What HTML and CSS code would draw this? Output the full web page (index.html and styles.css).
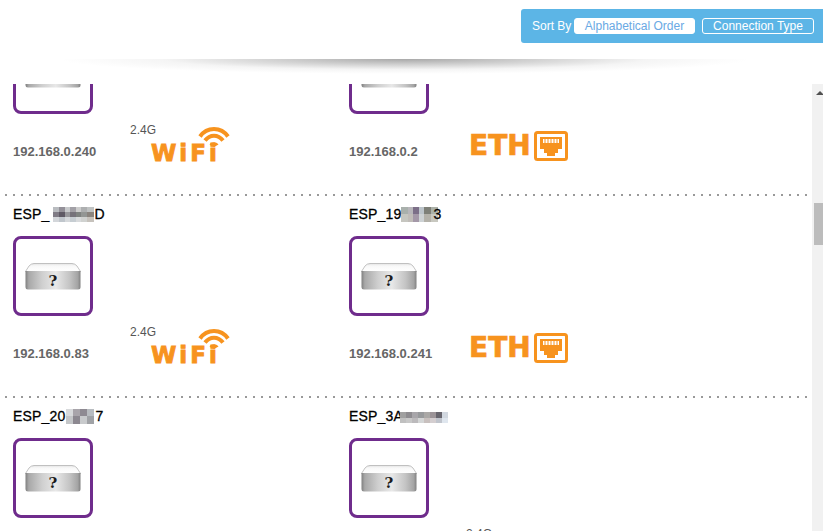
FILE: index.html
```html
<!DOCTYPE html>
<html lang="en">
<head>
<meta charset="utf-8">
<title>Devices</title>
<link rel="stylesheet" href="styles.css">
</head>
<body>
<svg class="defs" width="0" height="0" aria-hidden="true">
  <defs>
    <linearGradient id="side" x1="0" x2="1" y1="0" y2="0">
      <stop offset="0" stop-color="#7f7f7f"/>
      <stop offset=".06" stop-color="#a8a8a8"/>
      <stop offset=".3" stop-color="#cfcfcf"/>
      <stop offset=".55" stop-color="#e8e8e8"/>
      <stop offset=".8" stop-color="#c4c4c4"/>
      <stop offset=".95" stop-color="#a4a4a4"/>
      <stop offset="1" stop-color="#808080"/>
    </linearGradient>
    <linearGradient id="top" x1="0" x2="0" y1="0" y2="1">
      <stop offset="0" stop-color="#e2e2e2"/>
      <stop offset=".3" stop-color="#f8f8f8"/>
      <stop offset="1" stop-color="#ffffff"/>
    </linearGradient>
    <symbol id="mac" viewBox="0 0 56 27">
      <path d="M9 .5h38q3 0 5 2.500L55.500 8.500H.5L4 3Q6 .5 9 .5z" fill="url(#top)" stroke="#b4b4b4" stroke-width=".8"/>
      <path d="M.5 8h55v16q0 2.500-2.500 2.500H3Q.5 26.500.5 24z" fill="url(#side)"/>
      <text x="28" y="23" text-anchor="middle" class="mac-q">?</text>
    </symbol>
    <symbol id="rj" viewBox="0 0 34 30">
      <rect x="1.500" y="1.500" width="31" height="27" rx="2" fill="#fff" stroke="#f7931e" stroke-width="3"/>
      <path d="M6 6h22v12h-4v4h-3v3h-8v-3h-3v-4H6z" fill="#f7931e"/>
      <path d="M9 8h16v4H9z" fill="#fff"/>
      <path d="M11 8v4M14 8v4M17 8v4M20 8v4M23 8v4" stroke="#f7931e" stroke-width="1"/>
    </symbol>
    <symbol id="arcs" viewBox="0 0 32 20">
      <g fill="none" stroke="#f7931e" stroke-width="4">
        <path d="M2 9.500C9-.5 23-.5 30 9.500"/>
        <path d="M7 13.500C12 7 20 7 25 13.500"/>
      </g>
      <path d="M11.500 17.500C14 14.500 18 14.500 20.500 17.500L16 20z" fill="#f7931e"/>
    </symbol>
  </defs>
</svg>

<header class="top">
  <div class="sort">
    <span class="sort-label">Sort By</span>
    <button class="sort-btn is-active">Alphabetical Order</button>
    <button class="sort-btn">Connection Type</button>
  </div>
  <div class="shade"></div>
</header>

<div class="body">
  <main class="list">
    <div class="rows">
      <section class="row">
        <article class="cell">
          <h3 class="name">ESP_240</h3>
          <div class="device"><svg class="mac"><use href="#mac"/></svg></div>
          <div class="meta">
            <span class="ip">192.168.0.240</span>
            <span class="band">2.4G</span>
            <div class="wifi"><svg class="arcs"><use href="#arcs"/></svg><span class="wifi-text">WiFi</span></div>
          </div>
        </article>
        <article class="cell">
          <h3 class="name">ESP_002</h3>
          <div class="device"><svg class="mac"><use href="#mac"/></svg></div>
          <div class="meta">
            <span class="ip">192.168.0.2</span>
            <div class="eth"><span class="eth-text">ETH</span><svg class="rj"><use href="#rj"/></svg></div>
          </div>
        </article>
      </section>
      <div class="rule"></div>

      <section class="row">
        <article class="cell">
          <h3 class="name">ESP_<svg class="mosaic m43" viewBox="0 0 43 16"><g shape-rendering="crispEdges">
            <rect x="0" y="0" width="6" height="5" fill="#b9bcc0"/><rect x="6" y="0" width="6" height="5" fill="#939098"/><rect x="12" y="0" width="6" height="5" fill="#c8cacc"/><rect x="18" y="0" width="6" height="5" fill="#a2a0a6"/><rect x="24" y="0" width="6" height="5" fill="#cccccc"/><rect x="30" y="0" width="6" height="5" fill="#adafb0"/><rect x="36" y="0" width="7" height="5" fill="#bfc2c2"/>
            <rect x="0" y="5" width="6" height="6" fill="#7f7b85"/><rect x="6" y="5" width="6" height="6" fill="#5f5a65"/><rect x="12" y="5" width="6" height="6" fill="#98989c"/><rect x="18" y="5" width="6" height="6" fill="#75727a"/><rect x="24" y="5" width="6" height="6" fill="#7e8280"/><rect x="30" y="5" width="6" height="6" fill="#939694"/><rect x="36" y="5" width="7" height="6" fill="#8a847e"/>
            <rect x="0" y="11" width="6" height="5" fill="#d3d6da"/><rect x="6" y="11" width="6" height="5" fill="#c0c6cc"/><rect x="12" y="11" width="6" height="5" fill="#d6d9dc"/><rect x="18" y="11" width="6" height="5" fill="#c6cdd2"/><rect x="24" y="11" width="6" height="5" fill="#d8dadc"/><rect x="30" y="11" width="6" height="5" fill="#d0d2d0"/><rect x="36" y="11" width="7" height="5" fill="#c6c2bc"/>
          </g></svg>D</h3>
          <div class="device"><svg class="mac"><use href="#mac"/></svg></div>
          <div class="meta">
            <span class="ip">192.168.0.83</span>
            <span class="band">2.4G</span>
            <div class="wifi"><svg class="arcs"><use href="#arcs"/></svg><span class="wifi-text">WiFi</span></div>
          </div>
        </article>
        <article class="cell">
          <h3 class="name">ESP_19<svg class="mosaic m37" viewBox="0 0 37 15"><g shape-rendering="crispEdges">
            <rect x="0" y="0" width="7" height="7" fill="#a9b0ac"/><rect x="7" y="0" width="5" height="7" fill="#b8b6ba"/><rect x="12" y="0" width="6" height="7" fill="#7c6f88"/><rect x="18" y="0" width="5" height="7" fill="#bcc4ca"/><rect x="23" y="0" width="7" height="7" fill="#7e8078"/><rect x="30" y="0" width="7" height="7" fill="#aab0a8"/>
            <rect x="0" y="7" width="7" height="8" fill="#c6c6c0"/><rect x="7" y="7" width="5" height="8" fill="#c0bcb8"/><rect x="12" y="7" width="6" height="8" fill="#a498a8"/><rect x="18" y="7" width="5" height="8" fill="#cdd2d4"/><rect x="23" y="7" width="7" height="8" fill="#b4b2aa"/><rect x="30" y="7" width="7" height="8" fill="#c8c8c0"/>
          </g></svg><span class="name-end">3</span></h3>
          <div class="device"><svg class="mac"><use href="#mac"/></svg></div>
          <div class="meta">
            <span class="ip">192.168.0.241</span>
            <div class="eth"><span class="eth-text">ETH</span><svg class="rj"><use href="#rj"/></svg></div>
          </div>
        </article>
      </section>
      <div class="rule"></div>

      <section class="row">
        <article class="cell">
          <h3 class="name">ESP_20<svg class="mosaic m28" viewBox="0 0 28 15"><g shape-rendering="crispEdges">
            <rect x="0" y="0" width="7" height="7" fill="#d8dadc"/><rect x="7" y="0" width="7" height="7" fill="#a8a4aa"/><rect x="14" y="0" width="7" height="7" fill="#8e8a92"/><rect x="21" y="0" width="7" height="7" fill="#b8bcc0"/>
            <rect x="0" y="7" width="7" height="8" fill="#c4c6c8"/><rect x="7" y="7" width="7" height="8" fill="#8c8890"/><rect x="14" y="7" width="7" height="8" fill="#c8cacc"/><rect x="21" y="7" width="7" height="8" fill="#a0a2a6"/>
          </g></svg>7</h3>
          <div class="device"><svg class="mac"><use href="#mac"/></svg></div>
          <div class="meta">
            <span class="ip">192.168.0.90</span>
            <div class="eth"><span class="eth-text">ETH</span><svg class="rj"><use href="#rj"/></svg></div>
          </div>
        </article>
        <article class="cell">
          <h3 class="name">ESP_3A<svg class="mosaic m48" viewBox="0 0 48 13"><g shape-rendering="crispEdges">
            <rect x="0" y="0" width="48" height="2" fill="#fff"/>
            <rect x="0" y="2" width="6" height="6" fill="#a0a0a0"/><rect x="6" y="2" width="6" height="6" fill="#8e8c90"/><rect x="12" y="2" width="6" height="6" fill="#a8a6aa"/><rect x="18" y="2" width="6" height="6" fill="#989a9c"/><rect x="24" y="2" width="6" height="6" fill="#aaa8a6"/><rect x="30" y="2" width="6" height="6" fill="#9c9498"/><rect x="36" y="2" width="6" height="6" fill="#68666e"/><rect x="42" y="2" width="6" height="6" fill="#d2d8e0"/>
            <rect x="0" y="8" width="6" height="5" fill="#c0c0c0"/><rect x="6" y="8" width="6" height="5" fill="#c8c8c8"/><rect x="12" y="8" width="6" height="5" fill="#bcbabc"/><rect x="18" y="8" width="6" height="5" fill="#d4d6d6"/><rect x="24" y="8" width="6" height="5" fill="#c8c0be"/><rect x="30" y="8" width="6" height="5" fill="#d4ced0"/><rect x="36" y="8" width="6" height="5" fill="#c0c4cc"/><rect x="42" y="8" width="6" height="5" fill="#dfe6ee"/>
          </g></svg></h3>
          <div class="device"><svg class="mac"><use href="#mac"/></svg></div>
          <div class="meta">
            <span class="ip">192.168.0.91</span>
            <span class="band">2.4G</span>
            <div class="wifi"><svg class="arcs"><use href="#arcs"/></svg><span class="wifi-text">WiFi</span></div>
          </div>
        </article>
      </section>
    </div>
  </main>
  <aside class="scrollbar" aria-hidden="true">
    <span class="scroll-up"></span>
    <span class="scroll-thumb"></span>
  </aside>
</div>
</body>
</html>
```

FILE: styles.css
```css
* {
  box-sizing: border-box;
}

html,
body {
  margin: 0;
  height: 531px;
  overflow: hidden;
  background: #fff;
  font-family: "Liberation Sans", Arial, sans-serif;
}

.defs {
  display: block;
  height: 0;
}

.top {
  position: relative;
  height: 84px;
  padding-top: 9px;
  display: flex;
  justify-content: flex-end;
  align-items: flex-start;
}

.sort {
  width: 302px;
  height: 34px;
  padding: 0 9px 0 11px;
  display: flex;
  align-items: center;
  background: #5cb5e6;
  border-radius: 3px 0 0 3px;
  color: #fff;
  font-size: 12px;
}

.sort-label {
  width: 42px;
  flex: none;
}

.sort-btn {
  height: 16px;
  padding: 0;
  border: 1px solid #fff;
  border-radius: 3px;
  background: transparent;
  color: #fff;
  font: 12px/14px "Liberation Sans", Arial, sans-serif;
}

.sort-btn:nth-of-type(1) {
  width: 121px;
  margin-right: 7px;
}

.sort-btn:nth-of-type(2) {
  width: 112px;
}

.sort-btn.is-active {
  background: #fff;
  color: #6aa9e4;
}

.shade {
  position: absolute;
  left: 60px;
  top: 59px;
  width: 690px;
  height: 15px;
  background: radial-gradient(ellipse 50% 100% at 50% 0, #a8a8a8 0, rgba(190, 190, 190, .75) 35%, rgba(225, 225, 225, .35) 70%, rgba(255, 255, 255, 0) 100%);
}

.body {
  display: flex;
  height: 447px;
  overflow: hidden;
}

.list {
  flex: 1;
  overflow: hidden;
}

.rows {
  margin-top: -90px;
}

.row {
  height: 200px;
  display: grid;
  grid-template-columns: 336px 336px;
  padding-left: 13px;
}

.rule {
  height: 2px;
  margin: 0 4px 0 5px;
  background-image: linear-gradient(90deg, #999 2px, transparent 2px);
  background-size: 8px 2px;
}

.cell {
  padding-top: 9px;
}

.name {
  height: 18px;
  margin: 0;
  font-size: 14px;
  font-weight: 400;
  line-height: 18px;
  color: #000;
  letter-spacing: .2px;
  -webkit-text-stroke: .3px #000;
  white-space: nowrap;
}

.mosaic {
  display: inline-block;
  height: 15px;
  vertical-align: -3px;
}

.m43 { width: 43px; margin-left: 2px; }
.m37 { width: 37px; margin-left: -1px; }
.m28 { width: 28px; margin-right: 2px; }
.m48 { width: 48px; margin-left: -3px; }

.name-end {
  margin-left: -4px;
}

.device {
  width: 80px;
  height: 80px;
  margin-top: 13px;
  display: flex;
  align-items: center;
  justify-content: center;
  border: 3px solid #6f2c8c;
  border-radius: 8px;
  background: #fff;
}

.mac {
  width: 56px;
  height: 27px;
}

.mac-q {
  font: 700 15px "DejaVu Serif", serif;
  fill: #1c1c1c;
}

.meta {
  height: 64px;
  padding-top: 9px;
  display: flex;
  align-items: flex-start;
}

.ip {
  width: 117px;
  flex: none;
  margin-top: 21px;
  font-size: 13px;
  font-weight: 700;
  line-height: 16px;
  color: #666;
}

.band {
  width: 21px;
  flex: none;
  font-size: 12px;
  line-height: 15px;
  color: #555;
  white-space: nowrap;
}

.wifi {
  width: 79px;
  margin-top: 4px;
  display: flex;
  flex-direction: column;
}

.arcs {
  width: 32px;
  height: 20px;
  align-self: flex-end;
  margin-bottom: -4px;
}

.wifi-text {
  font: 700 23px/21px "DejaVu Sans", sans-serif;
  letter-spacing: 3px;
  color: #f7931e;
  -webkit-text-stroke: .9px #f7931e;
}

.eth {
  margin-left: 3px;
  margin-top: 8px;
  display: flex;
  align-items: center;
  gap: 3px;
}

.eth-text {
  font: 700 28px/30px "DejaVu Sans", sans-serif;
  color: #f7931e;
  -webkit-text-stroke: .7px #f7931e;
}

.rj {
  width: 34px;
  height: 30px;
}

.scrollbar {
  width: 11px;
  flex: none;
  padding-top: 7px;
  background: #f1f1f1;
  display: flex;
  flex-direction: column;
  overflow: hidden;
}

.scroll-up {
  width: 0;
  height: 0;
  margin-left: 4px;
  border-left: 4px solid transparent;
  border-right: 4px solid transparent;
  border-bottom: 4px solid #505050;
}

.scroll-thumb {
  width: 9px;
  height: 42px;
  margin-left: 2px;
  margin-top: 108px;
  background: #bcbcbc;
}
```
